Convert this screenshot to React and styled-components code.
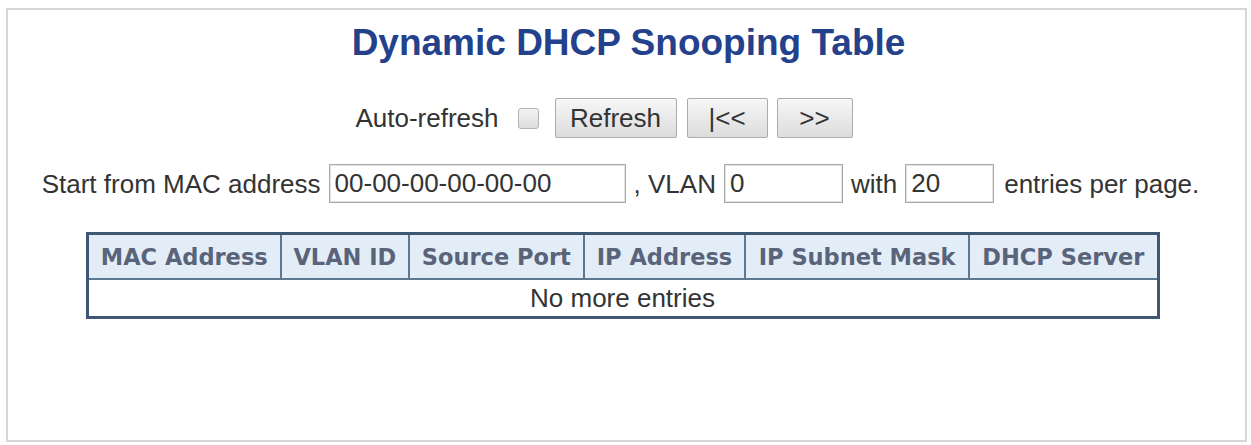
import React, { useState } from "react";
import styled, { createGlobalStyle } from "styled-components";

const GlobalStyle = createGlobalStyle`
  html, body {
    margin: 0;
    padding: 0;
    background: #ffffff;
  }
  body {
    font-family: "Liberation Sans", Arial, sans-serif;
    color: #333333;
  }
`;

// outer panel with the thin grey frame
const Frame = styled.div`
  box-sizing: border-box;
  margin: 8px 4px 3px 6px;
  height: 434px;
  border: 2px solid #d6d6d6;
  padding-top: 12px;
  display: flex;
  flex-direction: column;
  align-items: center;
`;

const Title = styled.h1`
  margin: 0;
  font-family: "Liberation Sans", Arial, sans-serif;
  font-size: 37px;
  line-height: 42px;
  font-weight: bold;
  color: #24418c;
  padding-left: 4px;
`;

const ControlRow = styled.div`
  display: flex;
  align-items: center;
  margin-top: 34px;
  padding-right: 45px;
  font-size: 26px;
  color: #333333;
`;

const Label = styled.span`
  font-size: 26px;
  line-height: 30px;
  white-space: nowrap;
  color: #333333;
`;

const CheckBox = styled.span`
  box-sizing: border-box;
  display: inline-block;
  width: 21px;
  height: 21px;
  margin: 0 16px 0 19px;
  border: 1px solid #b4b4b4;
  border-radius: 3px;
  background: ${(p) => (p.$checked ? "#9bb7d6" : "linear-gradient(#f2f2f2, #dedede)")};
  cursor: pointer;
`;

const Button = styled.button`
  box-sizing: border-box;
  width: ${(p) => p.$width}px;
  height: 40px;
  margin-right: ${(p) => p.$gap || 0}px;
  padding: 0;
  border: 1px solid #acacac;
  border-radius: 2px;
  background: linear-gradient(#f6f6f6, #dddddd);
  font-family: "Liberation Sans", Arial, sans-serif;
  font-size: 26px;
  color: #333333;
  cursor: pointer;
`;

const FilterRow = styled.div`
  display: flex;
  align-items: center;
  gap: 8px;
  margin-top: 26px;
  padding-right: 12px;
`;

const TextBox = styled.input`
  box-sizing: border-box;
  width: ${(p) => p.$width}px;
  height: 39px;
  padding: 0 5px;
  border: 1px solid #a9a9a9;
  box-shadow: inset 0 0 0 1px #e4e4e4;
  font-family: "Liberation Sans", Arial, sans-serif;
  font-size: 26px;
  color: #333333;
  background: #ffffff;
  outline: none;
`;

const Table = styled.table`
  margin-top: 29px;
  width: 1074px;
  margin-left: -8px;
  border-collapse: collapse;
  border: 3px solid #3f5873;
`;

const HeadCell = styled.th`
  padding: 8px 10px 7px;
  border: 2px solid #5f7892;
  background: #e3edf8;
  font-family: "DejaVu Sans", Verdana, sans-serif;
  font-size: 22.5px;
  font-weight: bold;
  line-height: 28px;
  color: #59647a;
  white-space: nowrap;
`;

const EmptyCell = styled.td`
  height: 36px;
  padding: 0;
  border: 2px solid #5f7892;
  text-align: center;
  font-family: "Liberation Sans", Arial, sans-serif;
  font-size: 26px;
  line-height: 30px;
  color: #333333;
`;

const columns = [
  "MAC Address",
  "VLAN ID",
  "Source Port",
  "IP Address",
  "IP Subnet Mask",
  "DHCP Server",
];

export default function App() {
  const [autoRefresh, setAutoRefresh] = useState(false);
  const [mac, setMac] = useState("00-00-00-00-00-00");
  const [vlan, setVlan] = useState("0");
  const [perPage, setPerPage] = useState("20");

  return (
    <>
      <GlobalStyle />
      <Frame>
        <Title>Dynamic DHCP Snooping Table</Title>
        <ControlRow>
          <Label>Auto-refresh</Label>
          <CheckBox
            $checked={autoRefresh}
            onClick={() => setAutoRefresh(!autoRefresh)}
          />
          <Button $width={122} $gap={10}>Refresh</Button>
          <Button $width={81} $gap={9}>|&lt;&lt;</Button>
          <Button $width={76}>&gt;&gt;</Button>
        </ControlRow>
        <FilterRow>
          <Label>Start from MAC address</Label>
          <TextBox $width={297} value={mac} onChange={(e) => setMac(e.target.value)} />
          <Label>, VLAN</Label>
          <TextBox $width={119} value={vlan} onChange={(e) => setVlan(e.target.value)} />
          <Label>with</Label>
          <TextBox $width={89} value={perPage} onChange={(e) => setPerPage(e.target.value)} />
          <Label style={{ marginLeft: 2 }}>entries per page.</Label>
        </FilterRow>
        <Table>
          <thead>
            <tr>
              {columns.map((c) => (
                <HeadCell key={c}>{c}</HeadCell>
              ))}
            </tr>
          </thead>
          <tbody>
            <tr>
              <EmptyCell colSpan={columns.length}>No more entries</EmptyCell>
            </tr>
          </tbody>
        </Table>
      </Frame>
    </>
  );
}
